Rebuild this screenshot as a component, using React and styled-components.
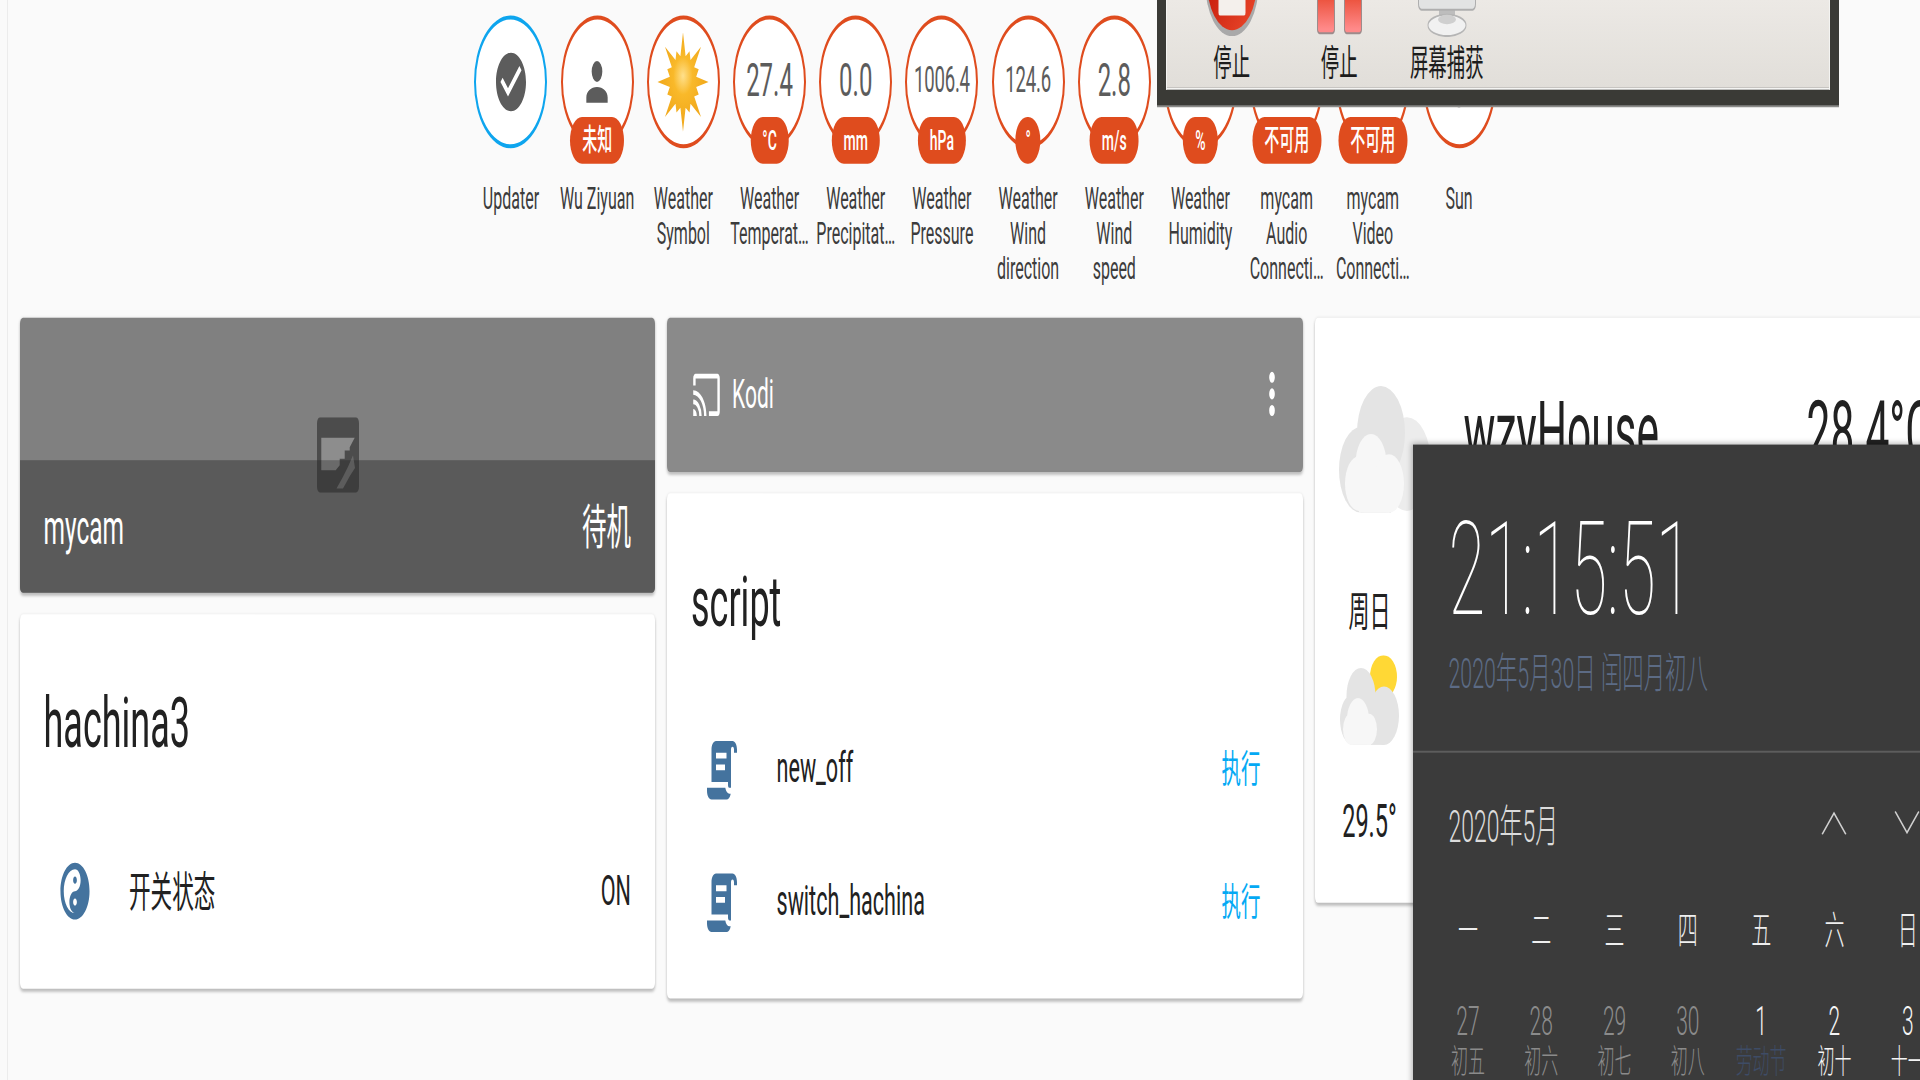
import React from "react";
import styled, { createGlobalStyle } from "styled-components";
import { FaYinYang } from "react-icons/fa";

const GlobalStyle = createGlobalStyle`
  html, body {
    margin: 0;
    padding: 0;
    width: 1920px;
    height: 1080px;
    overflow: hidden;
    background: #fafafa;
    font-family: Roboto, "Noto Sans CJK SC", sans-serif;
  }
  * {
    box-sizing: border-box;
  }
`;

// the whole capture is stretched vertically, so the page is laid out at
// natural size and scaled once here
const Page = styled.div`
  position: relative;
  width: 1920px;
  height: 554px;
  overflow: hidden;
  background: #fafafa;
  transform-origin: 0 0;
  transform: scaleY(1.95);
  display: flex;
`;

const Sidebar = styled.div`
  flex: 0 0 8px;
  border-right: 1px solid #ececec;
`;

const Main = styled.div`
  flex: 1;
  min-width: 0;
  display: flex;
  flex-direction: column;
`;

const BadgeRow = styled.div`
  height: 162.9px;
  padding: 8px 0 0 42px;
  display: flex;
  justify-content: center;
  flex-shrink: 0;
`;

const Badge = styled.div`
  width: 86.2px;
  display: flex;
  flex-direction: column;
  align-items: center;
`;

const Ring = styled.div`
  position: relative;
  width: 73px;
  height: 68px;
  border-radius: 50%;
  background: #fff;
  border: 2.5px solid ${(p) => (p.$blue ? "#0ea5ee" : "#df4c1e")};
  display: flex;
  align-items: center;
  justify-content: center;
  color: #5c5c5c;
`;

const Value = styled.span`
  margin-top: -2px;
  font-size: ${(p) => (p.$small ? "18.6px" : "24px")};
  letter-spacing: ${(p) => (p.$small ? "-0.2px" : "0")};
`;

const Unit = styled.span`
  position: absolute;
  left: 50%;
  bottom: -10.3px;
  transform: translateX(-50%);
  height: 24.6px;
  padding: 0 ${(p) => (p.$tight ? "10px" : "12px")};
  border-radius: 14px;
  background: #df4c1e;
  color: #fff;
  font-size: ${(p) => (p.$wide ? "15px" : "14px")};
  font-weight: 500;
  line-height: 24.6px;
  white-space: nowrap;
`;

const BadgeLabel = styled.div`
  margin-top: 16.6px;
  width: 100%;
  text-align: center;
  font-size: 16px;
  line-height: 18.2px;
  color: #3c3c3c;
  white-space: nowrap;
`;

const Columns = styled.div`
  display: flex;
  gap: 12px;
  padding-left: 11.5px;
`;

const Column = styled.div`
  flex: 0 0 635.5px;
  display: flex;
  flex-direction: column;
  gap: 11px;
`;

const Card = styled.div`
  position: relative;
  border-radius: 3px;
  background: #fff;
  overflow: hidden;
  height: ${(p) => p.$height}px;
  box-shadow: 0 1.5px 2px rgba(0, 0, 0, 0.22), 0 0 2px rgba(0, 0, 0, 0.08);
`;

const CameraCard = styled(Card)`
  background: #808080;
  display: flex;
  flex-direction: column;
  justify-content: flex-end;
`;

const CameraFooter = styled.div`
  height: 68px;
  padding: 0 24px;
  background: #5a5a5a;
  display: flex;
  align-items: center;
  justify-content: space-between;
  color: #fff;
  font-size: 24.5px;
`;

const CameraName = styled.span`
  margin-top: 1px;
`;

const CameraState = styled.span`
  margin-bottom: 2px;
`;

const BrokenImage = styled.svg`
  position: absolute;
  left: 297.5px;
  top: 51.5px;
  width: 42px;
  height: 38.5px;
`;

const KodiCard = styled(Card)`
  background: #8a8a8a;
  color: #fff;
  display: flex;
  align-items: center;
  padding: 0 14px 0 25px;
  font-size: 21px;
`;

const KodiName = styled.span`
  margin-left: 11px;
  flex: 1;
`;

const CardTitle = styled.div`
  height: ${(p) => p.$height}px;
  padding: 5px 24px 0;
  display: flex;
  align-items: center;
  font-size: 36px;
  color: #212121;
`;

const Row = styled.div`
  height: 68px;
  padding: 0 ${(p) => p.$right}px 0 24px;
  display: flex;
  align-items: center;
  font-size: 21.6px;
  color: #212121;
`;

const RowIcon = styled.div`
  flex: 0 0 62px;
  margin-top: ${(p) => (p.$drop ? "3px" : "0")};
  display: flex;
  justify-content: center;
  color: #44739e;
`;

const RowName = styled.span`
  margin-left: 23.5px;
  margin-bottom: ${(p) => (p.$raised ? "2px" : "0")};
  flex: 1;
`;

const RowAction = styled.span`
  margin-bottom: 2px;
  color: #03a9f4;
  font-size: 19.5px;
`;

const WeatherCard = styled(Card)`
  padding: 35px 0 0 24px;
  width: 640px;
`;

const WeatherTop = styled.div`
  display: flex;
  align-items: flex-start;
  height: 103.7px;
`;

const WeatherName = styled.div`
  margin: -1px 0 0 33px;
  width: 343px;
  font-size: 42.5px;
  line-height: 50px;
  color: #212121;
`;

const WeatherTemp = styled(WeatherName)`
  margin: -1px 0 0;
  width: auto;
`;

const Forecast = styled.div`
  width: 62px;
  display: flex;
  flex-direction: column;
  align-items: center;
  color: #212121;
`;

const ForecastDay = styled.div`
  font-size: 21px;
  line-height: 24px;
`;

const ForecastIcon = styled.svg`
  margin-top: 10px;
  width: 62px;
  height: 46px;
`;

const ForecastTemp = styled.div`
  margin-top: 27.5px;
  font-size: 23.5px;
  line-height: 24px;
`;

const CaptureWindow = styled.div`
  position: absolute;
  left: 1156.5px;
  top: 0;
  width: 682px;
  height: 54px;
  padding: 0 8.5px 8px 9px;
  background: #3a3a36;
  box-shadow: 0 1px 0 #8a8a88;
`;

const CaptureInner = styled.div`
  height: 100%;
  padding-left: 11.5px;
  display: flex;
  background: linear-gradient(#ece9e5, #e1ded9);
  border-bottom: 1px solid #f4f4f2;
  border-left: 1px solid #f4f4f2;
  border-right: 1px solid #f4f4f2;
`;

const CaptureItem = styled.div`
  width: 107.5px;
  display: flex;
  flex-direction: column;
  align-items: center;
  color: #1c1c1c;
  font-size: 18.4px;
  line-height: 24px;
  white-space: nowrap;
`;

const CaptureIcon = styled.div`
  height: 18.5px;
  margin-bottom: 2.25px;
  display: flex;
  align-items: flex-end;
  overflow: hidden;
`;

const ClockWindow = styled.div`
  position: absolute;
  left: 1412.5px;
  top: 227.8px;
  width: 540px;
  height: 340px;
  background: #3b3b3b;
  box-shadow: -1px -1px 4px rgba(0, 0, 0, 0.3);
  font-weight: 300;
`;

const ClockHead = styled.div`
  height: 158px;
  padding: 28.8px 0 0 36px;
  border-bottom: 1px solid #5d5d5d;
`;

const ClockTime = styled.div`
  font-size: 67px;
  font-weight: 100;
  line-height: 70px;
  color: #fff;
`;

const ClockDate = styled.div`
  margin-top: 6px;
  font-size: 21.4px;
  line-height: 26px;
  color: #5c6b85;
  white-space: nowrap;
`;

const MonthBar = styled.div`
  height: 72.5px;
  padding-left: 36px;
  display: flex;
  align-items: center;
  color: #dcdcdc;
  font-size: 23px;
`;

const MonthName = styled.span`
  flex: 0 0 372.5px;
`;

const MonthArrow = styled.svg`
  flex: 0 0 26px;
  height: 12px;
  margin-right: 47px;
  fill: none;
  stroke: #cfcfcf;
  stroke-width: 1.2;
`;

const CalendarGrid = styled.div`
  padding: 7.2px 0 0 18.8px;
  display: grid;
  grid-template-columns: repeat(7, 73.3px);
  text-align: center;
`;

const WeekDay = styled.div`
  height: 46.9px;
  font-size: 20px;
  line-height: 24px;
  color: #efefef;
`;

const DayCell = styled.div`
  color: ${(p) => (p.$muted ? "#8b8b8b" : "#f5f5f5")};
`;

const DayNumber = styled.div`
  font-size: 21px;
  line-height: 24px;
`;

const DayLunar = styled.div`
  margin-top: -3px;
  font-size: 17px;
  line-height: 22px;
  white-space: nowrap;
  color: ${(p) => p.$color || "inherit"};
`;

const MdiIcon = ({ d, size, color = "currentColor" }) => (
  <svg width={size} height={size} viewBox="0 0 24 24" fill={color}>
    <path d={d} />
  </svg>
);

const icons = {
  check:
    "M12 2C6.5 2 2 6.5 2 12S6.5 22 12 22 22 17.5 22 12 17.5 2 12 2M10 17L5 12L6.41 10.59L10 14.17L17.59 6.58L19 8L10 17Z",
  account:
    "M12,4A4,4 0 0,1 16,8A4,4 0 0,1 12,12A4,4 0 0,1 8,8A4,4 0 0,1 12,4M12,14C16.42,14 20,15.79 20,18V20H4V18C4,15.79 7.58,14 12,14Z",
  sunny:
    "M3.55,18.54L4.96,19.95L6.76,18.16L5.34,16.74M11,22.45C11.32,22.45 13,22.45 13,22.45V19.5H11M12,5.5A6,6 0 0,0 6,11.5A6,6 0 0,0 12,17.5A6,6 0 0,0 18,11.5C18,8.18 15.31,5.5 12,5.5M20,12.5H23V10.5H20M17.24,18.16L19.04,19.95L20.45,18.54L18.66,16.74M20.45,4.46L19.04,3.05L17.24,4.84L18.66,6.26M13,0.55H11V3.5H13M4,10.5H1V12.5H4M6.76,4.84L4.96,3.05L3.55,4.46L5.34,6.26L6.76,4.84Z",
  cast: "M1,10V12A9,9 0 0,1 10,21H12C12,14.92 7.07,10 1,10M1,14V16A5,5 0 0,1 6,21H8A7,7 0 0,0 1,14M1,18V21H4A3,3 0 0,0 1,18M21,3H3C1.89,3 1,3.89 1,5V8H3V5H21V19H14V21H21A2,2 0 0,0 23,19V5C23,3.89 22.1,3 21,3Z",
  dots: "M12,16A2,2 0 0,1 14,18A2,2 0 0,1 12,20A2,2 0 0,1 10,18A2,2 0 0,1 12,16M12,10A2,2 0 0,1 14,12A2,2 0 0,1 12,14A2,2 0 0,1 10,12A2,2 0 0,1 12,10M12,4A2,2 0 0,1 14,6A2,2 0 0,1 12,8A2,2 0 0,1 10,6A2,2 0 0,1 12,4Z",
  script:
    "M17.8,20C17.4,21.2 16.3,22 15,22H5C3.3,22 2,20.7 2,19V18H5L14.2,18C14.6,19.2 15.7,20 17,20H17.8M19,2C20.7,2 22,3.3 22,5V6H20V5C20,4.4 19.6,4 19,4C18.4,4 18,4.4 18,5V18H17C16.4,18 16,17.6 16,17V16H5V5C5,3.3 6.3,2 8,2H19M8,6V8H15V6H8M8,10V12H14V10H8Z",
};

// eight long rays with a short one between each, round a fat middle
const sunPoints = Array.from({ length: 32 }, (_, i) => {
  const angle = (i * Math.PI) / 16;
  const radius = i % 4 === 0 ? 25.5 : i % 4 === 2 ? 17 : 13.5;
  return `${(28 + Math.sin(angle) * radius).toFixed(1)},${(26 - Math.cos(angle) * radius).toFixed(1)}`;
}).join(" ");

const SunGlyph = () => (
  <svg width="56" height="52" viewBox="0 0 56 52">
    <defs>
      <radialGradient id="sunFill" cx="0.5" cy="0.44" r="0.42">
        <stop offset="0" stopColor="#ffe08c" />
        <stop offset="0.45" stopColor="#f9b92a" />
        <stop offset="1" stopColor="#f2ab1e" />
      </radialGradient>
    </defs>
    <polygon fill="url(#sunFill)" points={sunPoints} />
  </svg>
);

// big grey cloud with a paler one in front of it
const Clouds = () => (
  <svg width="92" height="65" viewBox="0 0 92 65">
    <circle cx="68" cy="40" r="24" fill="#ececec" />
    <g fill="#e4e4e4">
      <circle cx="42" cy="24" r="24" />
      <circle cx="22" cy="43" r="22" />
      <rect x="22" y="30" width="30" height="35" />
    </g>
    <g fill="#f7f7f7">
      <circle cx="32" cy="40" r="15.5" />
      <circle cx="20" cy="50" r="14" />
      <circle cx="50" cy="50" r="15" />
      <rect x="20" y="45" width="30" height="20" />
    </g>
  </svg>
);

const ForecastCloud = () => (
  <ForecastIcon viewBox="0 0 62 46">
    <ellipse cx="44.5" cy="11" rx="13.5" ry="11" fill="#ffd835" />
    <g fill="#e4e4e4">
      <circle cx="22" cy="21" r="14.5" />
      <circle cx="14" cy="33" r="13" />
      <circle cx="45" cy="31" r="15" />
      <rect x="14" y="24" width="31" height="22" />
    </g>
    <g fill="#f7f7f7">
      <circle cx="19" cy="33" r="11" />
      <circle cx="12" cy="38" r="8" />
      <circle cx="30" cy="38" r="8" />
      <rect x="12" y="36" width="20" height="10" />
    </g>
  </ForecastIcon>
);

const StopIcon = () => (
  <svg width="54" height="54" viewBox="0 0 54 54">
    <defs>
      <linearGradient id="stopRed" x1="0" y1="0" x2="1" y2="1">
        <stop offset="0" stopColor="#b80c00" />
        <stop offset="1" stopColor="#ec4a2c" />
      </linearGradient>
    </defs>
    <circle cx="27" cy="27" r="26.5" fill="#a9a9a9" />
    <circle cx="27" cy="25.5" r="25" fill="url(#stopRed)" />
    <rect x="13.5" y="20" width="27" height="23" rx="1.5" fill="#f4f0ec" />
  </svg>
);

const PauseIcon = () => (
  <svg width="45" height="40" viewBox="0 0 45 40">
    <defs>
      <linearGradient id="pauseRed" x1="0" y1="0" x2="0" y2="1">
        <stop offset="0.35" stopColor="#e0300e" />
        <stop offset="0.95" stopColor="#ff8a8a" />
      </linearGradient>
    </defs>
    <rect x="0.5" y="-4" width="17" height="42" rx="2" fill="url(#pauseRed)" stroke="#9c8c8c" />
    <rect x="27.5" y="-4" width="17" height="42" rx="2" fill="url(#pauseRed)" stroke="#9c8c8c" />
  </svg>
);

const MonitorIcon = () => (
  <svg width="58" height="19" viewBox="0 0 58 19">
    <rect x="21" y="3" width="16" height="7" fill="#bdbdbd" />
    <ellipse cx="29" cy="13" rx="19" ry="5.5" fill="#f1f1f1" stroke="#b5b5b5" />
    <ellipse cx="29" cy="10" rx="9" ry="2.4" fill="#cfcfcf" />
    <rect x="0.5" y="-6" width="57" height="11" rx="3" fill="#e2e3e3" stroke="#aeaeae" />
  </svg>
);

const badges = [
  { label: ["Updater"], icon: icons.check, iconSize: 36, blue: true },
  { label: ["Wu Ziyuan"], icon: icons.account, iconSize: 32, unit: "未知", wide: true },
  { label: ["Weather", "Symbol"], sun: true },
  { label: ["Weather", "Temperat…"], value: "27.4", unit: "°C" },
  { label: ["Weather", "Precipitat…"], value: "0.0", unit: "mm" },
  { label: ["Weather", "Pressure"], value: "1006.4", small: true, unit: "hPa" },
  { label: ["Weather", "Wind", "direction"], value: "124.6", small: true, unit: "°", tight: true },
  { label: ["Weather", "Wind", "speed"], value: "2.8", unit: "m/s" },
  { label: ["Weather", "Humidity"], value: "60", unit: "%" },
  { label: ["mycam", "Audio", "Connecti…"], unit: "不可用", wide: true },
  { label: ["mycam", "Video", "Connecti…"], unit: "不可用", wide: true },
  { label: ["Sun"], icon: icons.sunny, iconSize: 30 },
];

const weekDays = ["一", "二", "三", "四", "五", "六", "日"];

const days = [
  { n: 27, lunar: "初五", muted: true },
  { n: 28, lunar: "初六", muted: true },
  { n: 29, lunar: "初七", muted: true },
  { n: 30, lunar: "初八", muted: true },
  { n: 1, lunar: "劳动节", color: "#3e4c66" },
  { n: 2, lunar: "初十" },
  { n: 3, lunar: "十一" },
];

const App = () => (
  <>
    <GlobalStyle />
    <Page>
      <Sidebar />
      <Main>
        <BadgeRow>
          {badges.map((b, i) => (
            <Badge key={i}>
              <Ring $blue={b.blue}>
                {b.icon && <MdiIcon d={b.icon} size={b.iconSize} />}
                {b.sun && <SunGlyph />}
                {b.value && <Value $small={b.small}>{b.value}</Value>}
                {b.unit && (
                  <Unit $tight={b.tight} $wide={b.wide}>
                    {b.unit}
                  </Unit>
                )}
              </Ring>
              <BadgeLabel>
                {b.label.map((line) => (
                  <div key={line}>{line}</div>
                ))}
              </BadgeLabel>
            </Badge>
          ))}
        </BadgeRow>
        <Columns>
          <Column>
            <CameraCard $height={141}>
              <CameraFooter>
                <CameraName>mycam</CameraName>
                <CameraState>待机</CameraState>
              </CameraFooter>
              <BrokenImage viewBox="0 0 42 38.5">
                <path
                  fill="#2a2a2a"
                  fillOpacity="0.6"
                  fillRule="evenodd"
                  d="M3 0H39A3 3 0 0 1 42 3V35.5A3 3 0 0 1 39 38.5H3A3 3 0 0 1 0 35.5V3A3 3 0 0 1 3 0ZM4.3 10.5V27.1H18.7L22.7 24.6V21.2H27.7V17H32.7V15.3L37.7 10.5Z"
                />
                <polygon
                  fill="#fff"
                  fillOpacity="0.1"
                  points="4.3,10.5 37.7,10.5 32.7,15.3 32.7,17 27.7,17 27.7,21.2 22.7,21.2 22.7,24.6 18.7,27.1 4.3,27.1"
                />
                <polygon
                  fill="#fff"
                  fillOpacity="0.16"
                  points="36,19.5 31,25.4 26,30.5 19.5,36.5 26,36.5 33,30 38,26"
                />
              </BrokenImage>
            </CameraCard>
            <Card $height={191.7}>
              <CardTitle $height={108}>hachina3</CardTitle>
              <Row $right={24}>
                <RowIcon>
                  <FaYinYang size={30} />
                </RowIcon>
                <RowName $raised>开关状态</RowName>
                <span>ON</span>
              </Row>
            </Card>
          </Column>
          <Column>
            <KodiCard $height={79}>
              <MdiIcon d={icons.cast} size={29} />
              <KodiName>Kodi</KodiName>
              <MdiIcon d={icons.dots} size={34} />
            </KodiCard>
            <Card $height={259.5}>
              <CardTitle $height={107}>script</CardTitle>
              <Row $right={42}>
                <RowIcon $drop>
                  <MdiIcon d={icons.script} size={36} />
                </RowIcon>
                <RowName>new_off</RowName>
                <RowAction>执行</RowAction>
              </Row>
              <Row $right={42}>
                <RowIcon $drop>
                  <MdiIcon d={icons.script} size={36} />
                </RowIcon>
                <RowName>switch_hachina</RowName>
                <RowAction>执行</RowAction>
              </Row>
            </Card>
          </Column>
          <Column>
            <WeatherCard $height={300}>
              <WeatherTop>
                <Clouds />
                <WeatherName>wzyHouse</WeatherName>
                <WeatherTemp>28.4°C</WeatherTemp>
              </WeatherTop>
              <Forecast>
                <ForecastDay>周日</ForecastDay>
                <ForecastCloud />
                <ForecastTemp>29.5°</ForecastTemp>
              </Forecast>
            </WeatherCard>
          </Column>
        </Columns>
      </Main>

      <CaptureWindow>
        <CaptureInner>
          <CaptureItem>
            <CaptureIcon>
              <StopIcon />
            </CaptureIcon>
            停止
          </CaptureItem>
          <CaptureItem>
            <CaptureIcon>
              <PauseIcon />
            </CaptureIcon>
            停止
          </CaptureItem>
          <CaptureItem>
            <CaptureIcon>
              <MonitorIcon />
            </CaptureIcon>
            屏幕捕获
          </CaptureItem>
        </CaptureInner>
      </CaptureWindow>

      <ClockWindow>
        <ClockHead>
          <ClockTime>21:15:51</ClockTime>
          <ClockDate>2020年5月30日 闰四月初八</ClockDate>
        </ClockHead>
        <MonthBar>
          <MonthName>2020年5月</MonthName>
          <MonthArrow viewBox="0 0 26 12">
            <path d="M1 12L13 1L25 12" />
          </MonthArrow>
          <MonthArrow viewBox="0 0 26 12">
            <path d="M1 0L13 11L25 0" />
          </MonthArrow>
        </MonthBar>
        <CalendarGrid>
          {weekDays.map((d) => (
            <WeekDay key={d}>{d}</WeekDay>
          ))}
          {days.map((d) => (
            <DayCell key={d.n} $muted={d.muted}>
              <DayNumber>{d.n}</DayNumber>
              <DayLunar $color={d.color}>{d.lunar}</DayLunar>
            </DayCell>
          ))}
        </CalendarGrid>
      </ClockWindow>
    </Page>
  </>
);

export default App;
